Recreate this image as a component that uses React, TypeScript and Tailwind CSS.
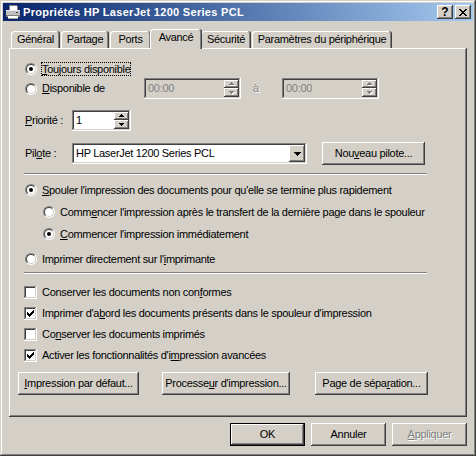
import React from "react";

const font = "font-['Liberation_Sans',Arial,sans-serif]";
const raised =
  "bg-[#d4d0c8] shadow-[inset_-1px_-1px_#404040,inset_1px_1px_#ffffff,inset_-2px_-2px_#808080]";
const sunken =
  "shadow-[inset_-1px_-1px_#ffffff,inset_1px_1px_#808080,inset_-2px_-2px_#d4d0c8,inset_2px_2px_#404040]";
const grayText = "text-[#808080] [text-shadow:1px_1px_0_#ffffff]";

function U({ children }: { children: React.ReactNode }) {
  return <span className="underline decoration-1 underline-offset-[1px]">{children}</span>;
}

function Radio({ on }: { on?: boolean }) {
  return (
    <span className="block w-[12px] h-[12px] shrink-0 rounded-full border border-t-[#808080] border-l-[#808080] border-r-white border-b-white">
      <span className="flex w-full h-full items-center justify-center rounded-full border border-t-[#404040] border-l-[#404040] border-r-[#d4d0c8] border-b-[#d4d0c8] bg-white">
        {on && <span className="block w-[4px] h-[4px] rounded-full bg-black" />}
      </span>
    </span>
  );
}

function Check({ on }: { on?: boolean }) {
  return (
    <span className={`flex w-[13px] h-[13px] shrink-0 items-center justify-center bg-white ${sunken}`}>
      {on && (
        <svg width="7" height="7" viewBox="0 0 7 7" shapeRendering="crispEdges">
          <path d="M0 2h1v3H0zM1 3h1v3H1zM2 4h1v3H2zM3 3h1v3H3zM4 2h1v3H4zM5 1h1v3H5zM6 0h1v3H6z" fill="#000" />
        </svg>
      )}
    </span>
  );
}

// petite flèche des boutons de réglage
function Arrow({ up, off }: { up?: boolean; off?: boolean }) {
  const d = up ? "M2 0h1v1H2zM1 1h3v1H1zM0 2h5v1H0z" : "M0 0h5v1H0zM1 1h3v1H1zM2 2h1v1H2z";
  return (
    <svg width="6" height="4" viewBox="0 0 6 4" shapeRendering="crispEdges">
      {off && <path d={d} fill="#fff" transform="translate(1 1)" />}
      <path d={d} fill={off ? "#808080" : "#000"} />
    </svg>
  );
}

function SpinEdit({ value, width, off }: { value: string; width: string; off?: boolean }) {
  return (
    <div className={`flex h-[21px] p-[2px] ${width} ${off ? "bg-[#d4d0c8]" : "bg-white"} ${sunken}`}>
      <span className={`flex-1 pl-[2px] leading-[17px] ${off ? "text-[#808080]" : ""}`}>{value}</span>
      <div className="flex flex-col w-[15px]">
        <div className={`flex h-[8px] items-center justify-center ${raised}`}>
          <Arrow up off={off} />
        </div>
        <div className={`flex h-[9px] items-center justify-center ${raised}`}>
          <Arrow off={off} />
        </div>
      </div>
    </div>
  );
}

function Button({ children, width, def, off }: { children: React.ReactNode; width: string; def?: boolean; off?: boolean }) {
  return (
    <div
      className={`flex h-[23px] shrink-0 items-center justify-center ${width} ${raised} ${def ? "border border-black" : ""} ${off ? grayText : ""}`}
    >
      {children}
    </div>
  );
}

function PrinterIcon() {
  return (
    <svg width="16" height="16" viewBox="0 0 16 16" shapeRendering="crispEdges">
      <path d="M5 1h6l1 1v5H4V2z" fill="#fff" stroke="#808080" strokeWidth="1" />
      <rect x="1" y="6" width="14" height="6" fill="#c0c0c0" />
      <rect x="1" y="6" width="14" height="1" fill="#e8e8e8" />
      <rect x="1" y="11" width="14" height="2" fill="#808080" />
      <rect x="3" y="12" width="10" height="3" fill="#fff" />
      <rect x="3" y="14" width="10" height="1" fill="#a0a0a0" />
      <rect x="11" y="8" width="2" height="1" fill="#404040" />
    </svg>
  );
}

function Tab({ label, active, width }: { label: string; active?: boolean; width: string }) {
  if (active) {
    return (
      <div
        className={`relative z-10 -mx-[2px] -mb-[1px] flex h-[20px] items-center justify-center pb-[3px] rounded-t-[3px] bg-[#d4d0c8] shadow-[inset_-1px_0_#404040,inset_1px_1px_#ffffff,inset_-2px_0_#808080] ${width}`}
      >
        {label}
      </div>
    );
  }
  return (
    <div
      className={`flex h-[17px] items-center justify-center rounded-t-[3px] bg-[#d4d0c8] shadow-[inset_-1px_0_#404040,inset_1px_1px_#ffffff,inset_-2px_0_#808080] ${width}`}
    >
      {label}
    </div>
  );
}

function RadioRow({ on, mt, ml, children }: { on?: boolean; mt: string; ml: string; children: React.ReactNode }) {
  return (
    <div className={`flex h-[14px] items-center ${mt} ${ml}`}>
      <Radio on={on} />
      <span className="ml-[5px] leading-[13px]">{children}</span>
    </div>
  );
}

function CheckRow({ on, mt, children }: { on?: boolean; mt: string; children: React.ReactNode }) {
  return (
    <div className={`ml-[15px] flex h-[14px] items-center ${mt}`}>
      <Check on={on} />
      <span className="ml-[5px] leading-[13px]">{children}</span>
    </div>
  );
}

function Separator({ mt }: { mt: string }) {
  return <div className={`ml-[15px] h-[2px] w-[403px] border-t border-b border-t-[#808080] border-b-white ${mt}`} />;
}

export default function App() {
  return (
    <div
      className={`flex h-[456px] w-[476px] flex-col bg-[#d4d0c8] p-[3px] text-[11px] tracking-[-0.3px] text-black select-none ${font} shadow-[inset_-1px_-1px_#404040,inset_1px_1px_#d4d0c8,inset_-2px_-2px_#808080,inset_2px_2px_#ffffff]`}
    >
      {/* barre de titre */}
      <div className="flex h-[18px] items-center bg-linear-to-r from-[#0a246a] to-[#a6caf0] px-[2px]">
        <PrinterIcon />
        <span className="ml-[2px] font-bold tracking-[0.3px] text-white">Propriétés HP LaserJet 1200 Series PCL</span>
        <div className="ml-auto flex gap-[2px]">
          <div className={`flex h-[14px] w-[16px] items-center justify-center font-bold text-[12px] leading-none tracking-normal ${raised}`}>
            ?
          </div>
          <div className={`flex h-[14px] w-[16px] items-center justify-center ${raised}`}>
            <svg width="8" height="7" viewBox="0 0 8 7" shapeRendering="crispEdges">
              <path
                d="M0 0h2v1H0zM6 0h2v1H6zM1 1h2v1H1zM5 1h2v1H5zM2 2h4v1H2zM3 3h2v1H3zM2 4h4v1H2zM1 5h2v1H1zM5 5h2v1H5zM0 6h2v1H0zM6 6h2v1H6z"
                fill="#000"
              />
            </svg>
          </div>
        </div>
      </div>

      {/* onglets + panneau */}
      <div className="flex flex-col px-[6px]">
        <div className="relative z-10 mt-[8px] flex h-[19px] items-end gap-[1px] pl-[2px]">
          <Tab label="Général" width="w-[49px]" />
          <Tab label="Partage" width="w-[48px]" />
          <Tab label="Ports" width="w-[41px]" />
          <Tab label="Avancé" width="w-[52px]" active />
          <Tab label="Sécurité" width="w-[50px]" />
          <Tab label="Paramètres du périphérique" width="w-[140px]" />
        </div>

        <div className="flex h-[369px] w-[458px] flex-col bg-[#d4d0c8] pt-[14px] shadow-[inset_-1px_-1px_#404040,inset_1px_1px_#ffffff,inset_-2px_-2px_#808080]">
          <div className="ml-[16px] flex h-[14px] items-center">
            <Radio on />
            <span className="ml-[4px] border border-dotted border-black leading-[12px]">
              <U>T</U>oujours disponible
            </span>
          </div>

          <div className="ml-[16px] mt-[2px] flex h-[21px] items-center">
            <Radio />
            <span className="ml-[5px] w-[102px]">
              <U>D</U>isponible de
            </span>
            <SpinEdit value="00:00" width="w-[97px]" off />
            <span className={`w-[41px] pl-[12px] ${grayText}`}>à</span>
            <SpinEdit value="00:00" width="w-[97px]" off />
          </div>

          <div className="ml-[16px] mt-[11px] flex h-[21px] items-center">
            <span className="w-[47px]">
              <U>P</U>riorité :
            </span>
            <SpinEdit value="1" width="w-[59px]" />
          </div>

          <div className="ml-[16px] mt-[11px] flex h-[23px] items-center">
            <span className="w-[47px]">
              Pil<U>o</U>te :
            </span>
            <div className={`flex h-[21px] w-[235px] items-center bg-white p-[2px] ${sunken}`}>
              <span className="flex-1 pl-[2px]">HP LaserJet 1200 Series PCL</span>
              <div className={`flex h-[17px] w-[16px] items-center justify-center ${raised}`}>
                <svg width="7" height="4" viewBox="0 0 7 4" shapeRendering="crispEdges">
                  <path d="M0 0h7v1H0zM1 1h5v1H1zM2 2h3v1H2zM3 3h1v1H3z" fill="#000" />
                </svg>
              </div>
            </div>
            <div className="ml-[15px]">
              <Button width="w-[103px]">
                Nou<U>v</U>eau pilote...
              </Button>
            </div>
          </div>

          <Separator mt="mt-[8px]" />

          <RadioRow on mt="mt-[8px]" ml="ml-[16px]">
            <U>S</U>pouler l'impression des documents pour qu'elle se termine plus rapidement
          </RadioRow>
          <RadioRow mt="mt-[8px]" ml="ml-[34px]">
            Comm<U>e</U>ncer l'impression après le transfert de la dernière page dans le spouleur
          </RadioRow>
          <RadioRow on mt="mt-[8px]" ml="ml-[34px]">
            <U>C</U>ommencer l'impression immédiatement
          </RadioRow>
          <RadioRow mt="mt-[11px]" ml="ml-[16px]">
            Imprimer directement sur l'<U>i</U>mprimante
          </RadioRow>

          <Separator mt="mt-[6px]" />

          <CheckRow mt="mt-[11px]">
            Conserver les documents non con<U>f</U>ormes
          </CheckRow>
          <CheckRow on mt="mt-[7px]">
            Imprimer d'a<U>b</U>ord les documents présents dans le spouleur d'impression
          </CheckRow>
          <CheckRow mt="mt-[7px]">
            Co<U>n</U>server les documents imprimés
          </CheckRow>
          <CheckRow on mt="mt-[7px]">
            Activer les fonctionnalités d'i<U>m</U>pression avancées
          </CheckRow>

          <div className="ml-[9px] mt-[10px] flex">
            <Button width="w-[121px]">
              <U>I</U>mpression par défaut...
            </Button>
            <div className="ml-[23px]">
              <Button width="w-[128px]">
                Processe<U>u</U>r d'impression...
              </Button>
            </div>
            <div className="ml-[25px]">
              <Button width="w-[113px]">
                Page de sépa<U>r</U>ation...
              </Button>
            </div>
          </div>
        </div>
      </div>

      {/* boutons du bas */}
      <div className="mt-[6px] flex justify-end gap-[6px] pr-[6px]">
        <Button width="w-[75px]" def>
          OK
        </Button>
        <Button width="w-[75px]">Annuler</Button>
        <Button width="w-[75px]" off>
          <U>A</U>ppliquer
        </Button>
      </div>
    </div>
  );
}
